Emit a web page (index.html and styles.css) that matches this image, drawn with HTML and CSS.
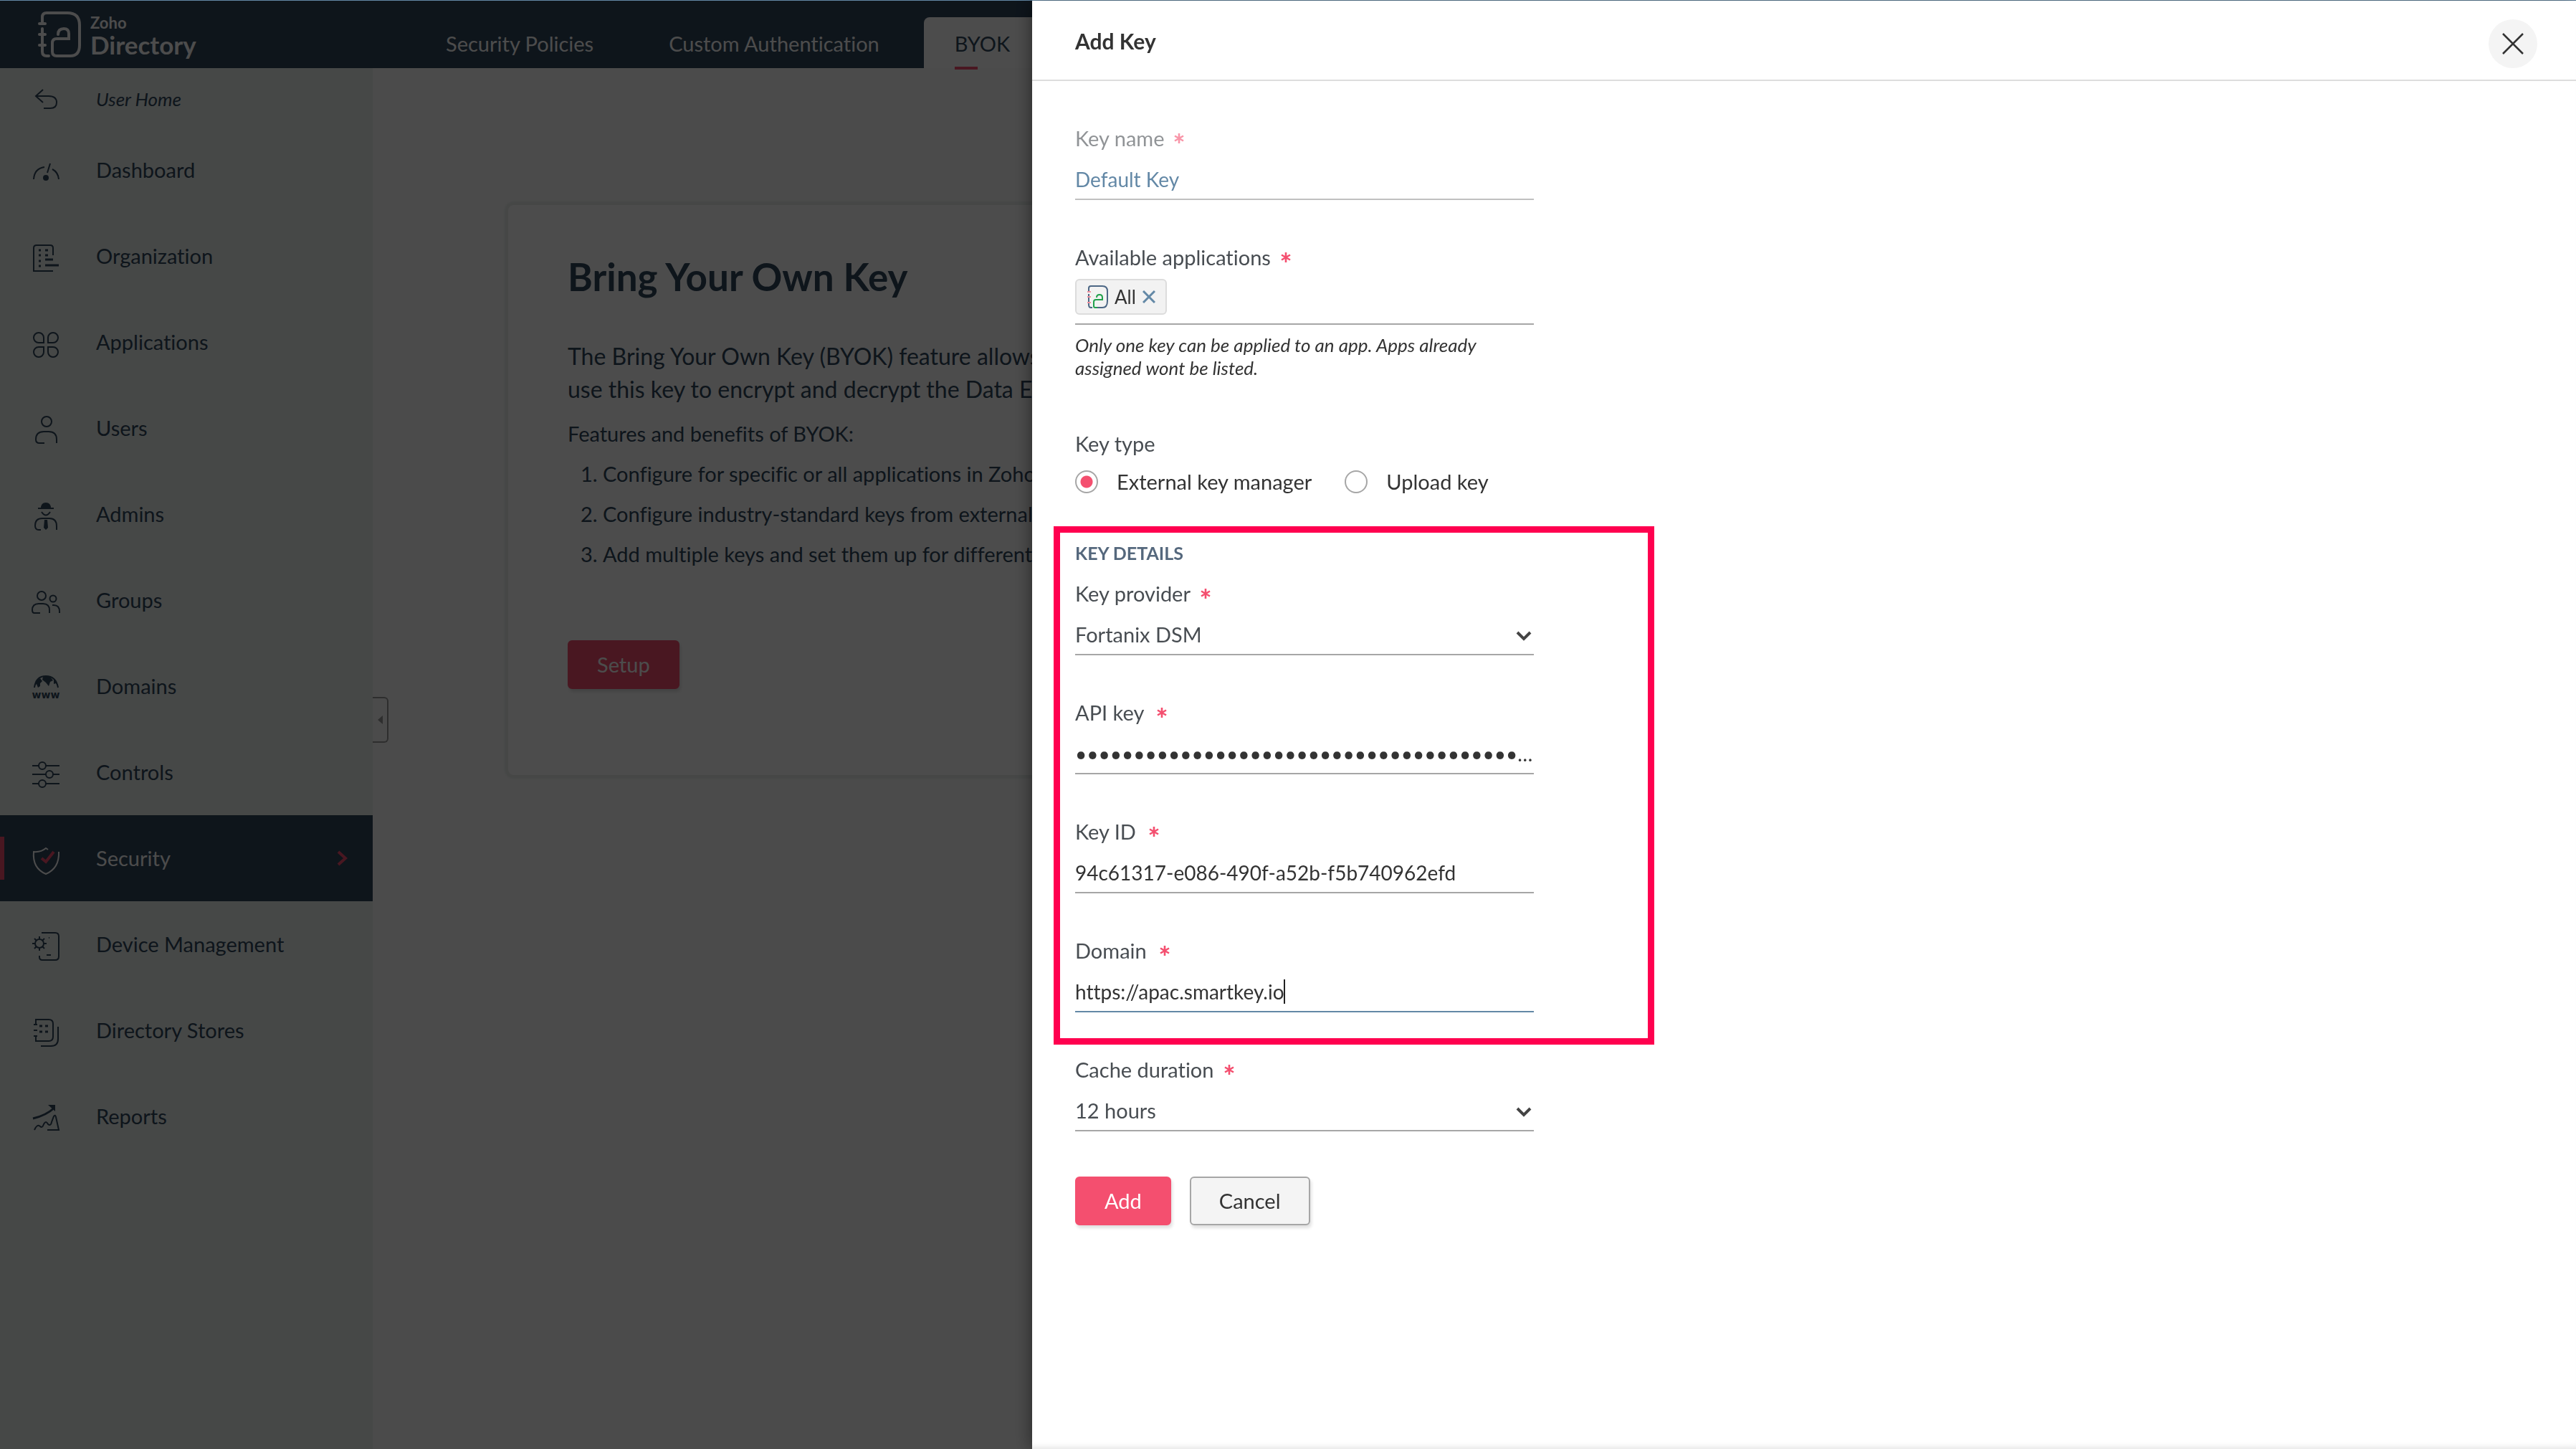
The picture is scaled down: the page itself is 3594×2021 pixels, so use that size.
FILE: index.html
```html
<!DOCTYPE html>
<html lang="en">
<head>
    <meta charset="UTF-8">
    <meta name="viewport" content="width=device-width, initial-scale=1.0">
    <title>Zoho Directory</title>
    <link rel="stylesheet" href="styles.css">
</head>
<body>

    <!-- shared shapes -->
    <svg class="sprite" aria-hidden="true">
        <symbol id="star" viewBox="0 0 14 16">
            <path d="M7 1v14M1 4.500l12 7M13 4.500l-12 7" fill="none" stroke="currentColor" stroke-width="2.600"/>
        </symbol>
    </svg>

    <header class="topbar">
        <a class="logo" href="#">
            <svg width="62" height="66" viewBox="0 0 62 66" fill="none" stroke="#fff" stroke-width="4" stroke-linecap="round">
                <path d="M7 18V9q0-6 6-6h29q17 0 17 17v28q0 15-13 15H27q-6 0-6-6V45q0-6 6-6h17V32q0-7-7-7-8 0-8 8"/>
                <path d="M7 25V57q0 6 6 6h3M3 18h8M3 33h8M3 48h8"/>
            </svg>
            <span class="logo-text"><small>Zoho</small><b>Directory</b></span>
        </a>
        <nav class="tabs">
            <a href="#">Security Policies</a>
            <a href="#">Custom Authentication</a>
            <a href="#" class="current">BYOK</a>
        </nav>
    </header>

    <div class="page">
        <aside class="sidebar">
            <a class="home" href="#">
                <svg class="icon" viewBox="0 0 48 48"><path d="M20 11L10 20l10 9M10 20h18q11 0 11 9 0 8-9 8h-9"/></svg>
                <em>User Home</em>
            </a>
            <a href="#">
                <svg class="icon" viewBox="0 0 48 48"><path d="M7 37q1-15 15-17M33 23q8 4 9 14M26 28l4-13"/><circle class="solid" cx="24" cy="35" r="4"/></svg>
                Dashboard
            </a>
            <a href="#">
                <svg class="icon" viewBox="0 0 48 48"><path d="M34 23V13q0-4-4-4H11q-4 0-4 4v32h27"/><path class="thick" d="M14 16h3M23 16h4M14 23h3M23 23h4M14 31h3M14 38h3M23 29h11M23 37h19"/></svg>
                Organization
            </a>
            <a href="#">
                <svg class="icon" viewBox="0 0 48 48"><path d="M21 25h-7a7 7 0 1 1 7-7zM27 25v-7a7 7 0 1 1 7 7zM21 31v7a7 7 0 1 1-7-7zM27 31h7a7 7 0 1 1-7 7z"/></svg>
                Applications
            </a>
            <a href="#">
                <svg class="icon" viewBox="0 0 48 48"><circle cx="25" cy="15" r="7"/><path d="M39 45v-5q0-11-11-11h-7q-11 0-11 11 0 5 5 5h7"/></svg>
                Users
            </a>
            <a href="#">
                <svg class="icon" viewBox="0 0 48 48"><path class="solid" d="M17 16q0-8 7-8t7 8zM22 32h4l1 11-3 3-3-3z"/><path d="M13 16h22M18 21q6 9 12 0M39 46v-5q0-11-10-11H19Q9 30 9 40q0 6 5 6h3"/></svg>
                Admins
            </a>
            <a href="#">
                <svg class="icon" viewBox="0 0 48 48"><circle cx="18" cy="18" r="6"/><circle cx="34" cy="22" r="4.500"/><path d="M29 42v-4q0-9-9-9h-6q-9 0-9 9 0 4 3 4h8M33 31h2q8 0 8 9v2"/></svg>
                Groups
            </a>
            <a href="#">
                <svg class="icon" viewBox="0 0 48 48"><path d="M8 26Q10 10 24 10t17 16"/><path class="solid" d="M8 24q2-9 8-11l3 4-3 3v4l-3 2-2-5zM20 11h10l4 5-4 2-2 6-4-5-5-4zM35 13q5 4 6 12l-3-5-3 1z"/><text class="www" x="24" y="41">www</text></svg>
                Domains
            </a>
            <a href="#">
                <svg class="icon" viewBox="0 0 48 48"><path d="M5 15h9M24 15h19M5 27h19M34 27h9M5 40h9M24 40h19"/><circle cx="19" cy="15" r="5"/><circle cx="29" cy="27" r="5"/><circle cx="19" cy="40" r="5"/></svg>
                Controls
            </a>
            <a href="#" class="active">
                <svg class="icon" viewBox="0 0 48 48"><path d="M42 15q1 23-18 31Q5 38 7 15q10 1 17-5l3 2"/><path class="tick" d="M18 24l6 5 11-14"/></svg>
                Security
                <svg class="arrow" width="16" height="22" viewBox="0 0 16 22"><path d="M2 2l10 9-10 9"/></svg>
            </a>
            <a href="#">
                <svg class="icon" viewBox="0 0 48 48"><path d="M18 8h19q5 0 5 5v28q0 5-5 5H19q-4 0-4-4v-2M25 39h6M28 15h1"/><circle cx="15" cy="23" r="6"/><path d="M15 13v4M15 29v4M5 23h4M21 23h4M8 16l3 3M19 27l3 3M22 16l-3 3M11 27l-3 3"/></svg>
                Device Management
            </a>
            <a href="#">
                <svg class="icon" viewBox="0 0 48 48"><path d="M10 16V9h18q6 0 6 6v18q0 6-6 6H10v-7M7 16h5M7 24h5M7 32h5M41 19v17q0 10-10 10H17"/><path class="thick" d="M15 18h4M23 18h4M15 26h4M23 26h4"/></svg>
                Directory Stores
            </a>
            <a href="#">
                <svg class="icon" viewBox="0 0 48 48"><path class="thick" d="M6 27q18-4 30-15"/><path class="solid" d="M27 8h10v9z"/><path d="M8 43q4-9 8-5 3 3 5-3 3-6 6 0 4 3 5-3l3-8q2-3 3 1l4 18H26"/></svg>
                Reports
            </a>
        </aside>

        <main class="content">
            <button class="collapse" aria-label="Collapse menu"><svg width="7" height="12" viewBox="0 0 7 12"><path d="M7 0v12L0 6z" fill="#999"/></svg></button>
            <section class="card">
                <h1>Bring Your Own Key</h1>
                <p class="intro">The Bring Your Own Key (BYOK) feature allows you to<br>use this key to encrypt and decrypt the Data Encryption Key</p>
                <p>Features and benefits of BYOK:</p>
                <ol>
                    <li>Configure for specific or all applications in Zoho</li>
                    <li>Configure industry-standard keys from external</li>
                    <li>Add multiple keys and set them up for different apps</li>
                </ol>
                <button class="btn primary setup">Setup</button>
            </section>
        </main>
    </div>

    <div class="overlay"></div>

    <!-- slide-in panel -->
    <div class="panel" role="dialog" aria-labelledby="panel-title">
        <div class="panel-head">
            <h2 id="panel-title">Add Key</h2>
            <button class="close" aria-label="Close"><svg width="30" height="30" viewBox="0 0 30 30"><path d="M1 1l28 28M29 1L1 29" stroke="#333" stroke-width="2.500"/></svg></button>
        </div>

        <form class="form">
            <div class="field disabled">
                <label for="key-name">Key name <svg class="star"><use href="#star"/></svg></label>
                <input type="text" id="key-name" value="Default Key" disabled>
            </div>

            <div class="field">
                <label for="apps">Available applications <svg class="star"><use href="#star"/></svg></label>
                <div class="chips">
                    <span class="chip">
                        <svg width="30" height="34" viewBox="0 0 30 34" fill="none" stroke="#4d6785" stroke-width="2">
                            <path d="M3 10V5q0-3 3-3h16q7 0 7 7v14q0 9-7 9h-3M3 13v15q0 4 3 4h2M19 32h-5"/>
                            <path d="M1 10h5M1 17h5M1 25h5" stroke="#f0929f"/>
                            <path d="M15 32h-3q-2 0-2-2v-6q0-3 3-3h9v-3q0-4-4-4-4 0-4 4" stroke="#22a04c"/>
                        </svg>
                        All
                        <button type="button" aria-label="Remove All"><svg width="18" height="18" viewBox="0 0 18 18"><path d="M1 1l16 16M17 1L1 17" stroke="#6388a6" stroke-width="3"/></svg></button>
                    </span>
                    <input type="text" id="apps">
                </div>
                <p class="hint">Only one key can be applied to an app. Apps already assigned wont be listed.</p>
            </div>

            <div class="key-type" role="radiogroup" aria-labelledby="type-label">
                <span id="type-label">Key type</span>
                <div class="radios">
                    <label><input type="radio" name="type" checked>External key manager</label>
                    <label><input type="radio" name="type">Upload key</label>
                </div>
            </div>

            <section class="details">
                <h3>KEY DETAILS</h3>
                <div class="field">
                    <label for="provider">Key provider <svg class="star"><use href="#star"/></svg></label>
                    <div class="select">
                        <select id="provider"><option>Fortanix DSM</option></select>
                        <svg width="22" height="14" viewBox="0 0 22 14"><path d="M2 2l9 9 9-9"/></svg>
                    </div>
                </div>
                <div class="field">
                    <label for="api-key">API key <svg class="star wide"><use href="#star"/></svg></label>
                    <input type="password" id="api-key" value="0123456789012345678901234567890123456789012345678901234567890123">
                </div>
                <div class="field">
                    <label for="key-id">Key ID <svg class="star wide"><use href="#star"/></svg></label>
                    <input type="text" id="key-id" value="94c61317-e086-490f-a52b-f5b740962efd">
                </div>
                <div class="field focused">
                    <label for="domain">Domain <svg class="star wide"><use href="#star"/></svg></label>
                    <input type="text" id="domain" value="https://apac.smartkey.io">
                    <i class="caret"></i>
                </div>
            </section>

            <div class="field">
                <label for="cache">Cache duration <svg class="star"><use href="#star"/></svg></label>
                <div class="select">
                    <select id="cache"><option>12 hours</option></select>
                    <svg width="22" height="14" viewBox="0 0 22 14"><path d="M2 2l9 9 9-9"/></svg>
                </div>
            </div>

            <div class="actions">
                <button type="button" class="btn primary">Add</button>
                <button type="button" class="btn">Cancel</button>
            </div>
        </form>
    </div>

</body>
</html>
```

FILE: styles.css
```css
* {
    box-sizing: border-box;
}

body {
    margin: 0;
    min-height: 100vh;
    display: flex;
    flex-direction: column;
    border-top: 1px solid #6388a6;
    background: #fafafa;
    color: #2f465d;
    font-family: Lato, "Liberation Sans", sans-serif;
    font-size: 29px;
    line-height: 34px;
    font-variant-ligatures: none;
}

a {
    color: inherit;
    text-decoration: none;
}

button,
input,
select {
    font: inherit;
    color: inherit;
}

button {
    cursor: pointer;
}

h1, h2, h3, p, ol {
    margin: 0;
}

.sprite {
    position: absolute;
    width: 0;
    height: 0;
}

/* top bar */
.topbar {
    display: flex;
    height: 94px;
    background: #2f465d;
    color: #fff;
}

.logo {
    display: flex;
    align-items: flex-start;
    gap: 12px;
    width: 579px;
    padding: 14px 0 0 52px;
}

.logo-text {
    display: flex;
    flex-direction: column;
    padding-top: 4px;
}

.logo-text small {
    font-size: 22px;
    line-height: 26px;
    font-weight: bold;
}

.logo-text b {
    font-size: 35px;
    line-height: 34px;
}

.tabs {
    display: flex;
    padding-top: 23px;
}

.tabs a {
    padding: 20px 62px 17px 43px;
}

.tabs .current {
    position: relative;
    background: #fff;
    color: #2f465d;
    border-radius: 8px 8px 0 0;
}

.tabs .current::after {
    content: "";
    position: absolute;
    left: 43px;
    bottom: -2px;
    width: 32px;
    height: 4px;
    background: #f44f6f;
}

/* sidebar */
.page {
    flex: 1;
    display: flex;
}

.sidebar {
    width: 520px;
    background: #ebf0ed;
}

.sidebar a {
    display: flex;
    align-items: center;
    gap: 46px;
    height: 120px;
    padding-left: 40px;
}

.sidebar .home {
    height: 82px;
    padding-top: 4px;
    font-size: 26px;
}

.icon {
    width: 48px;
    height: 48px;
    fill: none;
    stroke: currentColor;
    stroke-width: 2;
}

.icon .thick {
    stroke-width: 3;
}

.icon .solid {
    fill: currentColor;
    stroke: none;
}

.icon .tick {
    stroke: #f44f6f;
    stroke-width: 4;
}

.icon .www {
    fill: currentColor;
    stroke: none;
    font-family: "DejaVu Sans", sans-serif;
    font-size: 14px;
    font-weight: bold;
    text-anchor: middle;
}

.sidebar .active {
    background: linear-gradient(#f44f6f, #f44f6f) 0 30px / 6px 60px no-repeat #2f465d;
    color: #fff;
}

.arrow {
    margin-left: auto;
    margin-right: 34px;
    fill: none;
    stroke: #f44f6f;
    stroke-width: 4;
}

/* content */
.content {
    position: relative;
    flex: 1;
    padding: 191px 189px 0;
}

.collapse {
    position: absolute;
    left: 0;
    top: 877px;
    width: 22px;
    height: 64px;
    padding: 0;
    background: none;
    border: 2px solid #999;
    border-left: 0;
    border-radius: 0 6px 6px 0;
    line-height: 0;
}

.card {
    background: #fff;
    border-radius: 8px;
    box-shadow: 0 0 2px 5px #e9efec;
    padding: 68px 83px 120px;
}

.card h1 {
    font-size: 53px;
    line-height: 64px;
    margin-bottom: 56px;
}

.card .intro {
    font-size: 32px;
    line-height: 46px;
    margin-bottom: 22px;
}

.card ol {
    padding: 11px 0 0 49px;
    margin-bottom: 92px;
}

.card li {
    line-height: 56px;
}

.btn {
    height: 68px;
    padding: 0 39px;
    border: 2px solid #a6a6a6;
    border-radius: 6px;
    background: #f4f4f4;
    color: #333;
    box-shadow: 2px 4px 4px rgba(0, 0, 0, 0.12);
}

.btn.primary {
    border-color: #f44f6f;
    background: #f44f6f;
    color: #fff;
}

/* panel */
.overlay {
    position: fixed;
    inset: 1px 0 0;
    background: rgba(0, 0, 0, 0.7);
}

.panel {
    position: fixed;
    inset: 1px 0 0 1440px;
    overflow: auto;
    background: #fff;
    color: #333;
    box-shadow: 0 0 24px rgba(0, 0, 0, 0.5), inset 0 -8px 8px -6px rgba(0, 0, 0, 0.12);
}

.panel-head {
    display: flex;
    align-items: center;
    justify-content: space-between;
    height: 112px;
    padding: 10px 54px 0 60px;
    border-bottom: 2px solid #ddd;
}

.panel-head h2 {
    font-size: 30px;
    padding-bottom: 8px;
}

.close {
    display: flex;
    align-items: center;
    justify-content: center;
    width: 68px;
    height: 68px;
    padding: 0;
    border: 0;
    border-radius: 50%;
    background: #f4f4f4;
}

.form {
    padding: 63px 60px;
}

.field {
    position: relative;
    width: 640px;
    margin-bottom: 63px;
}

.field label {
    display: flex;
    align-items: center;
    gap: 14px;
    color: #484d52;
}

.star {
    width: 14px;
    height: 16px;
    color: #f44f6f;
}

.star.wide {
    margin-left: 4px;
}

.field > input,
.field select {
    display: block;
    width: 100%;
    height: 69px;
    padding: 23px 0 10px;
    border: 0;
    border-bottom: 2px solid #a6a6a6;
    border-radius: 0;
    background: none;
    outline: none;
    text-overflow: ellipsis;
    appearance: none;
}

.field > input {
    font-size: 28px;
}

.disabled label {
    opacity: 0.6;
}

.disabled > input {
    color: #6388a6;
    border-bottom-color: #c0c0c0;
}

.focused > input {
    border-bottom-color: #6388a6;
}

.caret {
    position: absolute;
    left: 291px;
    bottom: 12px;
    width: 2px;
    height: 34px;
    background: #222;
}

.select {
    position: relative;
    color: #484d52;
}

.select svg {
    position: absolute;
    right: 3px;
    bottom: 20px;
    fill: none;
    stroke: #444;
    stroke-width: 4;
}

.chips {
    display: flex;
    height: 77px;
    padding: 13px 0 12px;
    border-bottom: 2px solid #a6a6a6;
}

.chips input {
    flex: 1;
    min-width: 0;
    border: 0;
    background: none;
    outline: none;
}

.chip {
    display: flex;
    align-items: center;
    gap: 9px;
    padding: 0 14px;
    border: 2px solid #dcdcdc;
    border-radius: 6px;
    background: #f2f2f2;
    font-size: 26px;
}

.chip button {
    display: flex;
    padding: 0;
    border: 0;
    background: none;
}

.hint {
    margin-top: 12px;
    font-size: 26px;
    line-height: 32px;
    font-style: italic;
}

.key-type {
    padding-top: 10px;
    color: #484d52;
}

.radios {
    display: flex;
    gap: 46px;
    margin-top: 19px;
    color: #333;
}

.radios label {
    display: flex;
    align-items: center;
    gap: 26px;
}

.radios input {
    appearance: none;
    width: 32px;
    height: 32px;
    margin: 0;
    border: 2px solid #a6a6a6;
    border-radius: 50%;
}

.radios input:checked {
    background: radial-gradient(#f44f6f 8px, #fff 9px);
}

.details {
    width: 838px;
    margin: 45px 0 18px -30px;
    padding: 13px 21px 36px;
    border: 9px solid #ff004f;
}

.details h3 {
    margin-bottom: 25px;
    color: #55687d;
    font-size: 25px;
    line-height: 30px;
}

.details .field:last-child {
    margin-bottom: 0;
}

.actions {
    display: flex;
    gap: 26px;
}
```
